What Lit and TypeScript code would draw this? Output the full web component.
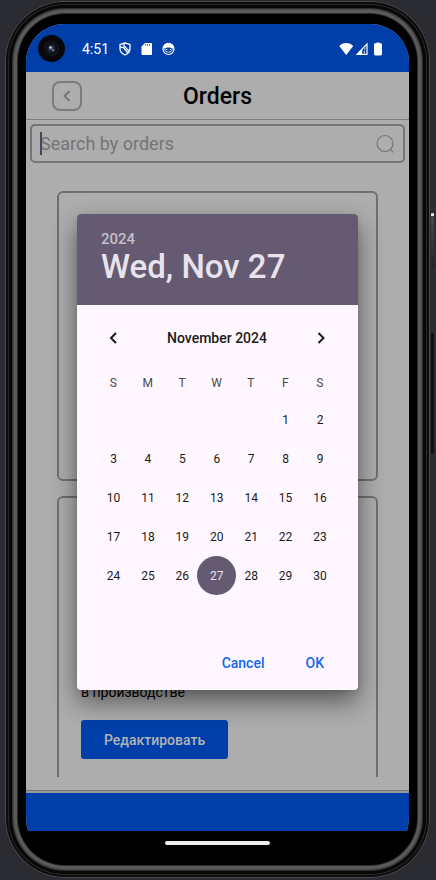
import { LitElement, html, css, svg } from "lit";
import { customElement, property, state } from "lit/decorators.js";
import { classMap } from "lit/directives/class-map.js";

const weekdays = ["S", "M", "T", "W", "T", "F", "S"];

@customElement("status-bar")
class StatusBar extends LitElement {
  static styles = css`
    :host {
      display: flex;
      align-items: center;
      height: 48px;
      padding: 0 23px 0 12px;
      background: #003fa9;
      color: #fff;
      font-size: 14px;
    }
    svg {
      display: block;
    }
    .time {
      margin: 2px 9px 0 17px;
    }
    .icons {
      display: flex;
      align-items: center;
      gap: 8px;
      margin-top: 2px;
    }
    .signals {
      display: flex;
      align-items: center;
      gap: 1px;
      margin: 2px 0 0 auto;
    }
  `;

  render() {
    return html`
      <svg width="27" height="27" viewBox="0 0 27 27" aria-hidden="true">
        <circle cx="13.5" cy="13.5" r="13.5" fill="#08080a" />
        <circle cx="13.5" cy="13.5" r="8" fill="#111216" />
        <circle cx="13.5" cy="13.5" r="4" fill="#1e212a" />
        <circle cx="13" cy="13" r="2.2" fill="#4f6079" />
        <circle cx="12.4" cy="12.6" r="1" fill="#dfe6ee" />
        <circle cx="15.2" cy="15.2" r="1" fill="#8390a3" />
      </svg>
      <span class="time">4:51</span>
      <span class="icons">
        <svg width="14" height="14" viewBox="0 0 14 14" fill="none" stroke="#fff" stroke-width="1.3" aria-hidden="true">
          <path d="M7 1 12 2.400V6.500c0 3-2 5.300-5 6.500-3-1.200-5-3.500-5-6.500V2.400z" />
          <path d="M2.300 5l3.200.5 4.500 5.500" />
          <path d="M6 1.500v2.500l5 5" />
        </svg>
        <svg width="14" height="14" viewBox="0 0 14 14" fill="#fff" aria-hidden="true">
          <path d="M5 1h6a1 1 0 0 1 1 1v10a1 1 0 0 1-1 1H2.500a1 1 0 0 1-1-1V4.500z" />
          <path d="M5.500 2.200v1.400M7.500 2.200v1.400M9.500 2.200v1.400" stroke="#003fa9" stroke-width=".9" />
        </svg>
        <svg width="14" height="14" viewBox="0 0 14 14" aria-hidden="true">
          <circle cx="6.500" cy="7" r="5.500" fill="none" stroke="#fff" stroke-width="1.200" />
          <path d="M1 6C1.300 2.800 3.800 1 6.500 1S11.700 2.800 12 6c-1 .8-2 .3-3 0-1.500-.6-3.500-.6-5 0-1 .3-2 .8-3 0z" fill="#fff" />
          <path d="M2.800 6.500c0 2.500 1.500 3.700 3.700 3.700s3.700-1.200 3.700-3.700" fill="none" stroke="#fff" stroke-width=".8" />
          <circle cx="4.700" cy="7.600" r=".7" fill="#fff" />
          <circle cx="8.300" cy="7.600" r=".7" fill="#fff" />
        </svg>
      </span>
      <span class="signals">
        <svg width="15" height="14" viewBox="0 0 15 14" fill="#fff" aria-hidden="true">
          <path d="M.2 4C2 2 4.400 1 7.200 1s5.200 1 7 3L7.200 13z" />
        </svg>
        <svg width="14" height="14" viewBox="0 0 14 14" aria-hidden="true">
          <path d="M12 2v10.400H2z" fill="none" stroke="#fff" stroke-width="1.200" />
          <path d="M7.200 7v5.500H2z" fill="#fff" />
          <path d="M9.300 11.500V8.500M9 7.500l1.800-1.500" stroke="#fff" stroke-width=".8" />
        </svg>
        <svg width="16" height="14" viewBox="0 0 16 14" fill="#fff" aria-hidden="true">
          <path d="M6.500 1.200V.6h3v.6h1c1 0 1.500.6 1.500 1.500V12c0 .8-.5 1.400-1.500 1.400h-5C4.500 13.400 4 12.800 4 12V2.700c0-.9.500-1.500 1.500-1.500z" />
        </svg>
      </span>
    `;
  }
}

@customElement("date-dialog")
class DateDialog extends LitElement {
  @property({ type: Number }) year = 2024;
  @property({ type: Number }) month = 10;
  @state() private day = 27;

  static styles = css`
    :host {
      display: block;
      border-radius: 4px;
      background: #fef7ff;
      box-shadow: 0 12px 26px rgba(0, 0, 0, 0.48), 0 2px 6px rgba(0, 0, 0, 0.1);
      color: #1d1b20;
      overflow: hidden;
    }
    button {
      border: 0;
      padding: 0;
      background: none;
      color: inherit;
      font: inherit;
      cursor: pointer;
    }
    svg {
      display: block;
    }
    .heading {
      height: 91px;
      box-sizing: border-box;
      padding: 16px 24px 0;
      background: #645b72;
      color: #e9e2ec;
      font-weight: 500;
    }
    .year {
      display: block;
      color: #c5bfca;
      font-size: 15px;
      line-height: 18px;
    }
    .date {
      margin: 0;
      font-size: 33px;
      font-weight: 500;
      line-height: 38px;
    }
    .body {
      padding: 18px 21px 9px 19px;
    }
    .months {
      display: flex;
      align-items: center;
      justify-content: space-between;
      padding: 0 1px 12px 2px;
    }
    .title {
      font-size: 14px;
      font-weight: 500;
    }
    .step {
      display: grid;
      place-items: center;
      width: 30px;
      height: 30px;
    }
    .grid {
      width: 100%;
      table-layout: fixed;
      border-collapse: collapse;
      font-size: 12px;
      line-height: 14px;
    }
    th {
      height: 35px;
      padding: 0;
      color: #4c4a50;
      font-weight: 400;
    }
    td {
      height: 39px;
      padding: 0;
    }
    .day {
      display: grid;
      place-items: center;
      width: 39px;
      height: 39px;
      margin: 0 -2px;
      border-radius: 50%;
    }
    .selected {
      background: #645b72;
      color: #e9e2ec;
    }
    .actions {
      display: flex;
      justify-content: flex-end;
      gap: 25px;
      margin-top: 11px;
      padding: 0 5px;
      color: #1266f1;
      font-size: 14px;
      font-weight: 500;
    }
    .action {
      height: 36px;
      padding: 0 8px;
    }
  `;

  private weeks(): number[][] {
    const first = new Date(this.year, this.month, 1).getDay();
    const count = new Date(this.year, this.month + 1, 0).getDate();
    return Array.from({ length: 6 }, (_, w) =>
      Array.from({ length: 7 }, (_, d) => {
        const n = w * 7 + d - first + 1;
        return n > 0 && n <= count ? n : 0;
      })
    );
  }

  private step(by: number) {
    const next = new Date(this.year, this.month + by, 1);
    this.year = next.getFullYear();
    this.month = next.getMonth();
  }

  render() {
    const date = new Date(this.year, this.month, this.day);
    const label = date.toLocaleDateString("en-US", { weekday: "short", month: "short", day: "numeric" });
    const title = date.toLocaleDateString("en-US", { month: "long", year: "numeric" });
    const chevron = (d: string) => svg`<path d=${d} fill="none" stroke="#1d1b20" stroke-width="2" />`;
    return html`
      <header class="heading">
        <span class="year">${this.year}</span>
        <h2 class="date">${label}</h2>
      </header>
      <div class="body">
        <div class="months">
          <button class="step" aria-label="Previous month" @click=${() => this.step(-1)}>
            <svg width="12" height="12" viewBox="0 0 12 12">${chevron("M9 1 4 6l5 5")}</svg>
          </button>
          <span class="title">${title}</span>
          <button class="step" aria-label="Next month" @click=${() => this.step(1)}>
            <svg width="12" height="12" viewBox="0 0 12 12">${chevron("M3.500 1l5 5-5 5")}</svg>
          </button>
        </div>
        <table class="grid">
          <thead>
            <tr>${weekdays.map((d) => html`<th scope="col">${d}</th>`)}</tr>
          </thead>
          <tbody>
            ${this.weeks().map(
              (week) => html`<tr>
                ${week.map(
                  (n) => html`<td>
                    ${n
                      ? html`<button
                          class=${classMap({ day: true, selected: n === this.day })}
                          @click=${() => (this.day = n)}
                        >${n}</button>`
                      : ""}
                  </td>`
                )}
              </tr>`
            )}
          </tbody>
        </table>
        <div class="actions">
          <button class="action">Cancel</button>
          <button class="action">OK</button>
        </div>
      </div>
    `;
  }
}

@customElement("app-root")
class AppRoot extends LitElement {
  static styles = css`
    :host {
      display: block;
      box-sizing: border-box;
      height: 100vh;
      padding: 1px 6px 2px 5px;
      background: #2b2c31;
      font-family: Roboto, "Noto Sans", sans-serif;
      position: relative;
    }
    svg {
      display: block;
    }
    .device {
      display: flex;
      flex-direction: column;
      box-sizing: border-box;
      height: 100%;
      padding: 23px 21px 0;
      border-radius: 60px;
      background: #000;
      box-shadow: inset 0 0 0 1px #4a4a4c, inset 0 0 0 3px #0c0c0d, inset 0 0 0 4px #29292a,
        inset 0 0 0 7px #070708, inset 0 0 0 8px #303030, inset 0 0 0 9px #484848,
        inset 0 0 0 12px #5a5a5a, inset 0 0 0 13px #2a2a2a;
    }
    .key {
      position: absolute;
      right: 2px;
      width: 3px;
      border-radius: 1px;
      background: #111113;
    }
    .power {
      top: 213px;
      height: 55px;
      background: linear-gradient(#e0e0e0 0 3px, #4a4a4c 3px, #232325);
    }
    .volume {
      top: 333px;
      height: 121px;
    }
    .screen {
      position: relative;
      display: flex;
      flex: 1;
      flex-direction: column;
      min-height: 0;
      overflow: hidden;
      border-radius: 38px 38px 3px 3px / 38px 38px 16px 16px;
      background: #adadad;
    }
    .topbar {
      display: grid;
      grid-template-columns: 30px 1fr 30px;
      align-items: center;
      height: 47px;
      padding: 0 26px;
      border-bottom: 1px solid #7d7d7d;
    }
    .back {
      display: grid;
      place-items: center;
      width: 30px;
      height: 30px;
      padding: 0;
      border: 2px solid #7c7c7c;
      border-radius: 8px;
      background: none;
    }
    .name {
      margin: 2px 0 0;
      color: #000;
      font-size: 23px;
      font-weight: 500;
      line-height: 28px;
      text-align: center;
    }
    .search {
      position: relative;
      display: flex;
      align-items: center;
      height: 35px;
      margin: 4px;
      padding: 0 8px;
      border: 2px solid #757575;
      border-radius: 5px;
    }
    .caret {
      position: absolute;
      left: 8px;
      top: 6px;
      width: 2px;
      height: 23px;
      background: #4b4558;
    }
    .query {
      flex: 1;
      min-width: 0;
      padding: 0;
      border: 0;
      outline: 0;
      background: none;
      font-family: inherit;
      font-size: 18px;
      line-height: 24px;
    }
    .query::placeholder {
      color: #757575;
      opacity: 1;
    }
    .list {
      display: flex;
      flex: 1 1 0;
      flex-direction: column;
      gap: 15px;
      min-height: 0;
      margin: 24px 31px 13px;
      overflow: hidden;
    }
    .card {
      flex: none;
      box-sizing: border-box;
      min-height: 290px;
      padding: 184px 22px 20px;
      border: 2px solid #707070;
      border-radius: 6px;
    }
    .state {
      margin: 0 0 18px;
      color: #000;
      font-size: 14px;
      line-height: 20px;
    }
    .edit {
      height: 39px;
      padding: 0 23px;
      border: 0;
      border-radius: 3px;
      background: #003fa9;
      color: #b3b3b3;
      font-family: inherit;
      font-size: 14px;
      font-weight: 500;
    }
    .tabs {
      height: 38px;
      border-top: 2px solid #9a9a9a;
      background: #003fa9;
    }
    .rule {
      height: 1px;
      background: #757575;
    }
    .overlay {
      position: absolute;
      inset: 190px 51px auto;
    }
    .home {
      display: flex;
      justify-content: center;
      padding: 10px 0 33px;
    }
    .pill {
      width: 105px;
      height: 4px;
      border-radius: 2px;
      background: #ededed;
    }
  `;

  render() {
    return html`
      <div class="key power"></div>
      <div class="key volume"></div>
      <div class="device">
        <main class="screen">
          <status-bar></status-bar>
          <header class="topbar">
            <button class="back" aria-label="Back">
              <svg width="12" height="14" viewBox="0 0 12 14">
                <path d="M8.500 2 3.500 7l5 5" fill="none" stroke="#757575" stroke-width="2" />
              </svg>
            </button>
            <h1 class="name">Orders</h1>
          </header>
          <div class="search">
            <span class="caret"></span>
            <input class="query" type="text" placeholder="Search by orders" aria-label="Search by orders" />
            <svg width="20" height="20" viewBox="0 0 20 20" fill="none" stroke="#757575" stroke-width="1.200" aria-hidden="true">
              <circle cx="10" cy="9.500" r="8" />
              <path d="M15.500 15.500l2.800 2.800" />
            </svg>
          </div>
          <div class="list">
            <article class="card"></article>
            <article class="card">
              <p class="state">в производстве</p>
              <button class="edit">Редактировать</button>
            </article>
          </div>
          <div class="rule"></div>
          <nav class="tabs"></nav>
          <div class="overlay" role="dialog" aria-label="Select date">
            <date-dialog></date-dialog>
          </div>
        </main>
        <div class="home"><span class="pill"></span></div>
      </div>
    `;
  }
}
